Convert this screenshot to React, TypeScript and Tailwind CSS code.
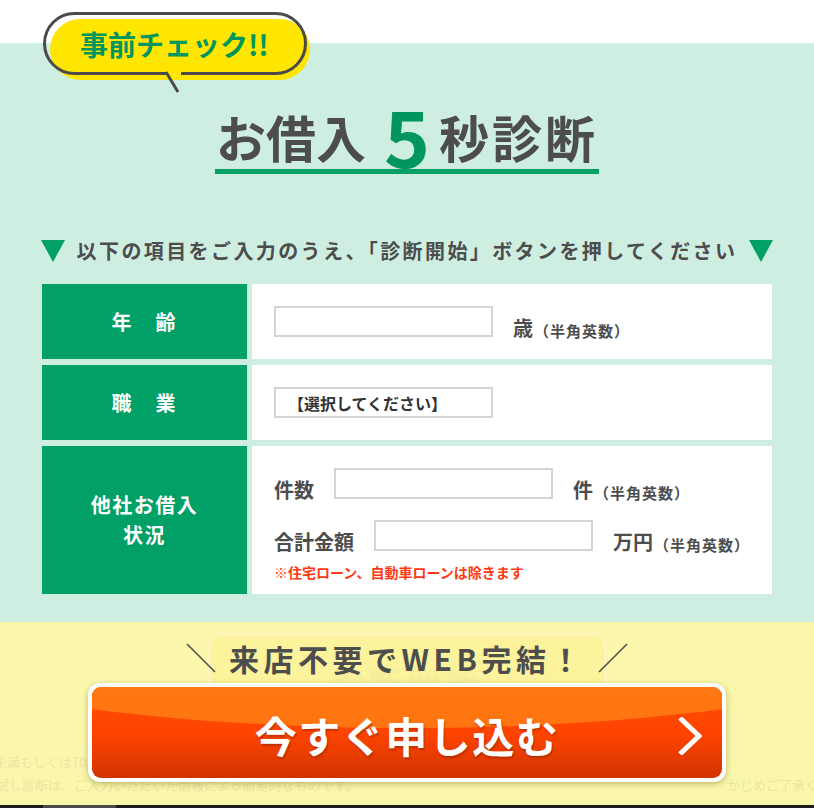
import React from 'react';

const font = { fontFamily: '"Noto Sans CJK JP", "Noto Sans", sans-serif' };

const Bubble = () => (
  <div className="absolute left-[40px] top-[10px] w-[275px] h-[85px]">
    <svg width="275" height="85" viewBox="0 0 275 85" className="absolute inset-0">
      <rect x="10" y="9" width="260" height="61" rx="30.5" fill="#ffe600" />
      <rect x="4.5" y="3.5" width="261" height="60" rx="30" fill="none" stroke="#4a4a4a" strokeWidth="3" />
      <line x1="126" y1="63.5" x2="141" y2="63.5" stroke="#ffe600" strokeWidth="4" />
      <line x1="126" y1="62" x2="138" y2="82" stroke="#4a4a4a" strokeWidth="3" />
    </svg>
    <div className="absolute left-[40px] top-[20px] text-[28px] font-bold leading-none text-[#00965e] whitespace-nowrap">
      事前チェック!!
    </div>
  </div>
);

const Tri = () => (
  <svg width="24" height="22" viewBox="0 0 24 22">
    <polygon points="0,0 24,0 12,22" fill="#00a066" />
  </svg>
);

const Label = ({ children }: { children: React.ReactNode }) => (
  <div className="w-[205px] shrink-0 bg-[#00a066] flex items-center justify-center text-white font-bold text-[20px] leading-[30px] text-center">
    {children}
  </div>
);

const Input = () => (
  <div className="w-[219px] h-[31px] border-2 border-[#d4d4d4] bg-white shrink-0" />
);

const Unit = ({ main }: { main: string }) => (
  <div className="flex items-end ml-[20px] leading-none mb-[-1px]">
    <span className="text-[20px] font-bold text-[#4d4d4d]">{main}</span>
    <span className="text-[15px] font-bold text-[#4d4d4d] ml-[1px] tracking-[1px]">（半角英数）</span>
  </div>
);

export default function App() {
  return (
    <div className="w-[814px] h-[808px] overflow-hidden bg-white" style={font}>
      <div className="relative">
        <div className="h-[43px] bg-white" />
        <div className="bg-[#cfeee2] h-[579px] pt-[60px]">
          <div className="flex justify-center">
            <div className="inline-flex items-end border-b-[5px] border-[#00a066] px-[1px] pb-[4px] text-[#4d4d4d] font-bold leading-none">
              <span className="text-[50px] tracking-[0px] mb-[4px]">お借入</span>
              <span className="text-[78px] text-[#00965e] ml-[18px] mr-[9px] leading-[0.8]">5</span>
              <span className="text-[50px] tracking-[3px] mb-[4px]">秒診断</span>
            </div>
          </div>

          <div className="flex items-center justify-center mt-[66px] h-[22px]">
            <Tri />
            <span className="mx-[12px] text-[20px] font-bold text-[#4d4d4d] tracking-[2.4px] leading-none whitespace-nowrap">
              以下の項目をご入力のうえ、「診断開始」ボタンを押してください
            </span>
            <Tri />
          </div>

          <div className="mx-[42px] mt-[22px] flex flex-col gap-[6px]">
            <div className="flex gap-[5px] h-[75px]">
              <Label><span className="tracking-[2px]">年　齢</span></Label>
              <div className="flex-1 bg-white flex items-end pl-[22px] pb-[22px]">
                <Input />
                <Unit main="歳" />
              </div>
            </div>
            <div className="flex gap-[5px] h-[75px]">
              <Label><span className="tracking-[2px]">職　業</span></Label>
              <div className="flex-1 bg-white flex items-center pl-[22px]">
                <div className="w-[219px] h-[31px] border-2 border-[#d4d4d4] bg-white flex items-center pl-[12px] text-[16px] font-bold text-[#333] leading-none">
                  【選択してください】
                </div>
              </div>
            </div>
            <div className="flex gap-[5px] h-[148px]">
              <Label>
                <span className="tracking-[1.5px]">他社お借入<br />状況</span>
              </Label>
              <div className="flex-1 bg-white pl-[22px] pt-[22px]">
                <div className="flex items-end">
                  <span className="text-[20px] font-bold text-[#4d4d4d] leading-none mr-[20px] mb-[-1px]">件数</span>
                  <Input />
                  <Unit main="件" />
                </div>
                <div className="flex items-end mt-[21px]">
                  <span className="text-[20px] font-bold text-[#4d4d4d] leading-none mr-[20px] mb-[-1px]">合計金額</span>
                  <Input />
                  <Unit main="万円" />
                </div>
                <div className="mt-[14px] text-[14px] font-bold text-[#ff3a12] leading-none">
                  ※住宅ローン、自動車ローンは除きます
                </div>
              </div>
            </div>
          </div>
        </div>

        <Bubble />
      </div>

      <div className="relative h-[183px] bg-[#faf7ac] overflow-hidden">
        <div className="mx-auto mt-[11px] w-[399px] h-[62px] rounded-[14px] bg-[#fcf39c] border-[3px] border-[#fdf6b8] flex items-end justify-center">
          <span className="text-[34px] font-bold text-[#f6ee9c] leading-none tracking-[4px] mb-[-8px]">診断開始</span>
        </div>
        <div className="mt-[55px] text-[13px] leading-[23px] text-[#ebe5a2] whitespace-nowrap">
          <div className="ml-[-6px]">未満もしくは70歳以上の方はお申込みいただけません。</div>
          <div className="flex justify-between">
            <span className="ml-[-4px]">試し診断は、ご入力いただいた情報による簡易的なものです。</span>
            <span className="mr-[-4px]">かじめご了承く</span>
          </div>
        </div>

        <div className="absolute inset-0 flex flex-col items-center">
          <div className="flex items-center mt-[19px] h-[34px]">
            <svg width="30" height="30" viewBox="0 0 30 30">
              <line x1="1" y1="1" x2="29" y2="29" stroke="#4d4d4d" strokeWidth="1.6" />
            </svg>
            <span className="mx-[13px] text-[30px] font-bold text-[#4d4d4d] tracking-[4.5px] leading-none whitespace-nowrap">
              来店不要でWEB完結！
            </span>
            <svg width="30" height="30" viewBox="0 0 30 30">
              <line x1="29" y1="1" x2="1" y2="29" stroke="#4d4d4d" strokeWidth="1.6" />
            </svg>
          </div>
          <div className="mt-[8px] w-[638px] h-[99px] rounded-[12px] bg-white p-[4px] shadow-[0_2px_6px_rgba(120,110,20,0.45)]">
            <div className="relative w-full h-full rounded-[9px] overflow-hidden bg-gradient-to-b from-[#ff4d06] via-[#ff4400] to-[#d23400] flex items-center justify-center">
              <div className="absolute left-[-285px] top-[-211px] w-[1200px] h-[252px] rounded-[50%] bg-gradient-to-b from-[#ff8a14] to-[#ff7410]" />
              <span
                className="relative text-[42px] font-bold text-white tracking-[1.5px] leading-none mt-[4px]"
                style={{ textShadow: '1px 2px 2px rgba(120,30,0,0.45)' }}
              >
                今すぐ申し込む
              </span>
              <svg className="absolute right-[20px] top-[30px]" width="24" height="38" viewBox="0 0 24 38">
                <polyline points="2,1 21,19 2,37" fill="none" stroke="#fff" strokeWidth="5" strokeLinejoin="miter" />
              </svg>
            </div>
          </div>
        </div>
      </div>

      <div className="h-[3px] bg-[#1c1c1c] flex">
        <div className="ml-[43px] w-[73px] bg-[#4a4a4a]" />
      </div>
    </div>
  );
}
